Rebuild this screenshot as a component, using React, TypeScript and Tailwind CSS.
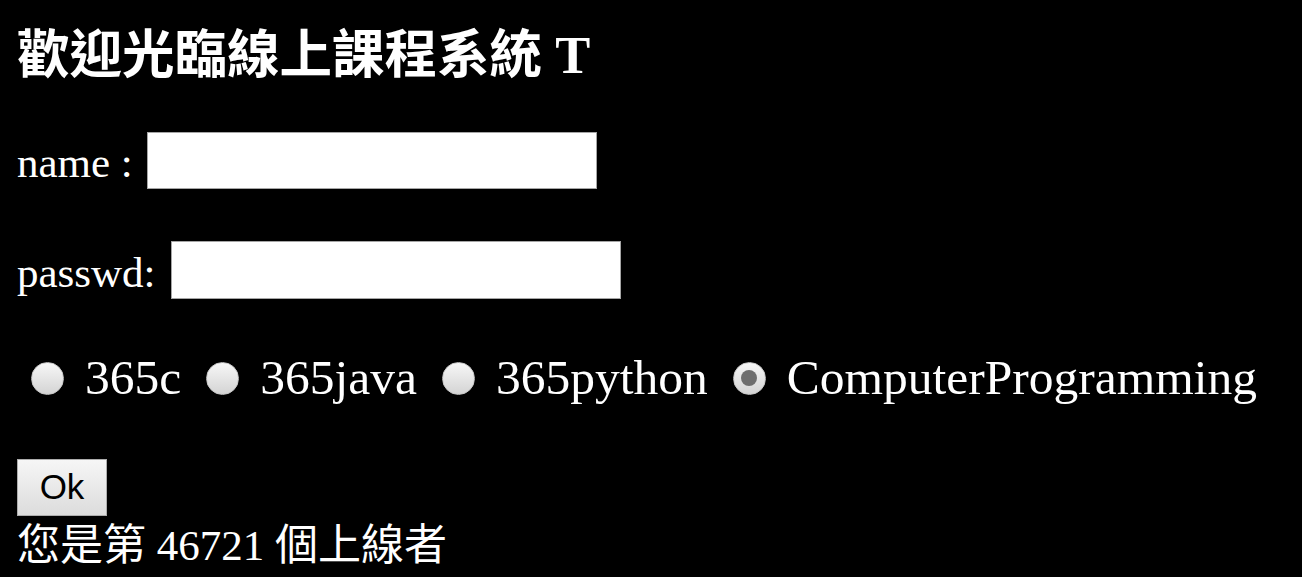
import React from 'react';

const courses = [
  { label: '365c', checked: false },
  { label: '365java', checked: false },
  { label: '365python', checked: false },
  { label: 'ComputerProgramming', checked: true },
];

const Radio: React.FC<{ checked: boolean }> = ({ checked }) => (
  <span className="flex items-center justify-center w-[33px] h-[33px] rounded-full border border-[#c8c8c8] bg-gradient-to-b from-[#f7f7f7] to-[#d4d4d4] shrink-0">
    {checked && <span className="block w-[16px] h-[16px] rounded-full bg-[#6e6e6e]" />}
  </span>
);

export default function App() {
  return (
    <div className="min-h-screen bg-black text-white pl-[17px] font-['Liberation_Serif','Noto_Sans_CJK_TC',serif]">
      <h2 className="pt-[27px] text-[52.5px] leading-[56px] font-bold">歡迎光臨線上課程系統 T</h2>

      <div className="mt-[49px] h-[57px] flex items-center">
        <span className="text-[43px] leading-none pt-[4px]">name :</span>
        <input type="text" className="ml-[14px] w-[450px] h-[57px] bg-white border border-[#a5a5a5] text-black outline-none" />
      </div>

      <div className="mt-[52px] h-[58px] flex items-center">
        <span className="text-[43px] leading-none pt-[4px]">passwd:</span>
        <input type="password" className="ml-[15px] w-[450px] h-[58px] bg-white border border-[#a5a5a5] text-black outline-none" />
      </div>

      <div className="mt-[54px] h-[50px] flex items-center gap-[25px] pl-[14px]">
        {courses.map((c) => (
          <label key={c.label} className="flex items-center gap-[21px]">
            <Radio checked={c.checked} />
            <span className="text-[49.5px] leading-none">{c.label}</span>
          </label>
        ))}
      </div>

      <button className="mt-[56px] block w-[90px] h-[57px] border border-[#adadad] bg-gradient-to-b from-[#f6f6f6] to-[#dcdcdc] text-black text-[35px] font-['Liberation_Sans',sans-serif]">
        Ok
      </button>

      <div className="mt-[8px] text-[43px] leading-none">您是第 46721 個上線者</div>
    </div>
  );
}
